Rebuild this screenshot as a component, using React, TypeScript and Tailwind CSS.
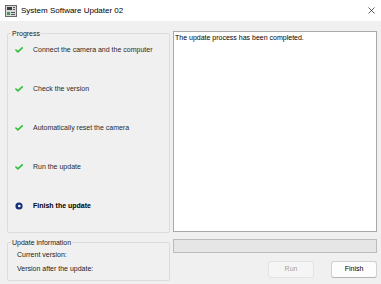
import React from "react";

const Check = () => (
  <svg width="8" height="6" viewBox="0 0 8 6" className="shrink-0">
    <path d="M0.9 3 L2.9 4.9 L7.2 0.8" fill="none" stroke="#2fbf3a" strokeWidth="1.6" strokeLinecap="round" strokeLinejoin="round" />
  </svg>
);

const Current = () => (
  <svg width="8" height="8" viewBox="0 0 8 8" className="shrink-0">
    <circle cx="4" cy="4" r="3.6" fill="#15307a" />
    <circle cx="4.3" cy="4" r="1.3" fill="#ffffff" />
  </svg>
);

const AppIcon = () => (
  <svg width="12" height="12" viewBox="0 0 12 12">
    <rect x="0.5" y="0.5" width="11" height="11" fill="#d8d8d8" stroke="#6a6a6a" />
    <rect x="2" y="2" width="5" height="3" fill="#3d3d3d" />
    <rect x="8" y="2" width="2" height="1" fill="#555" />
    <rect x="8" y="4" width="2" height="1" fill="#555" />
    <rect x="2" y="7" width="3" height="3" fill="#3aa04a" />
    <rect x="6" y="7" width="4" height="1" fill="#555" />
    <rect x="6" y="9" width="4" height="1" fill="#555" />
  </svg>
);

const CloseIcon = () => (
  <svg width="7" height="7" viewBox="0 0 7 7">
    <path d="M0.5 0.5 L6.5 6.5 M6.5 0.5 L0.5 6.5" stroke="#333" strokeWidth="0.8" />
  </svg>
);

const steps = [
  { label: "Connect the camera and the computer", done: true },
  { label: "Check the version", done: true },
  { label: "Automatically reset the camera", done: true },
  { label: "Run the update", done: true },
  { label: "Finish the update", done: false },
];

export default function App() {
  return (
    <div
      className="w-[381px] h-[284px] bg-[#f0f0f0] flex flex-col overflow-hidden text-[#1b1b1b]"
      style={{ fontFamily: '"Liberation Sans", Arial, sans-serif' }}
    >
      <div className="h-[21px] bg-white flex items-center pl-[5px] pr-[6px] shrink-0">
        <AppIcon />
        <span className="ml-[4px] text-[8px] leading-[10px] text-black">System Software Updater 02</span>
        <span className="ml-auto flex items-center">
          <CloseIcon />
        </span>
      </div>
      <div className="flex-1 flex pt-[8px] pl-[7px] pr-[4px] gap-[3px]">
        <div className="w-[163px] flex flex-col gap-[5px]">
          <fieldset className="h-[204px] border border-[#dcdcdc] rounded-[2px] p-0 m-0">
            <legend className="ml-[3px] px-[1px] text-[7px] leading-[9px]">Progress</legend>
            <div className="flex flex-col gap-[29px] pt-[7px] pl-[7px]">
              {steps.map((s) => (
                <div key={s.label} className="h-[10px] flex items-center">
                  <div className="w-[8px] flex items-center justify-center">
                    {s.done ? <Check /> : <Current />}
                  </div>
                  <span
                    className={
                      "ml-[10px] text-[7px] leading-[10px] whitespace-nowrap " +
                      (s.done ? "text-[#2a2a2a]" : "font-bold text-black")
                    }
                  >
                    {s.label}
                  </span>
                </div>
              ))}
            </div>
          </fieldset>
          <fieldset className="h-[43px] border border-[#dcdcdc] rounded-[2px] p-0 m-0">
            <legend className="ml-[3px] px-[1px] text-[7px] leading-[9px]">Update information</legend>
            <div className="flex flex-col gap-[4px] pt-[3px] pl-[9px]">
              <div className="h-[10px] text-[7px] leading-[10px]">Current version:</div>
              <div className="h-[10px] text-[7px] leading-[10px]">Version after the update:</div>
            </div>
          </fieldset>
        </div>
        <div className="flex-1 flex flex-col pt-[2px]">
          <div className="h-[201px] bg-white border border-[#a9a9a9] px-[1px] pt-[1px] text-[7px] leading-[10px] text-black">
            The update process has been completed.
          </div>
          <div className="mt-[7px] h-[14px] bg-[#e6e6e6] border border-[#bcbcbc]" />
          <div className="mt-[8px] flex justify-end gap-[17px]">
            <div className="w-[46px] h-[17px] rounded-[3px] border border-[#e3e3e3] bg-[#f5f5f5] flex items-center justify-center text-[7px] text-[#a3a3a3]">
              Run
            </div>
            <div className="w-[46px] h-[17px] rounded-[3px] border border-[#d0d0d0] border-b-[#b5b5b5] bg-[#fdfdfd] flex items-center justify-center text-[7px] text-black">
              Finish
            </div>
          </div>
        </div>
      </div>
    </div>
  );
}
